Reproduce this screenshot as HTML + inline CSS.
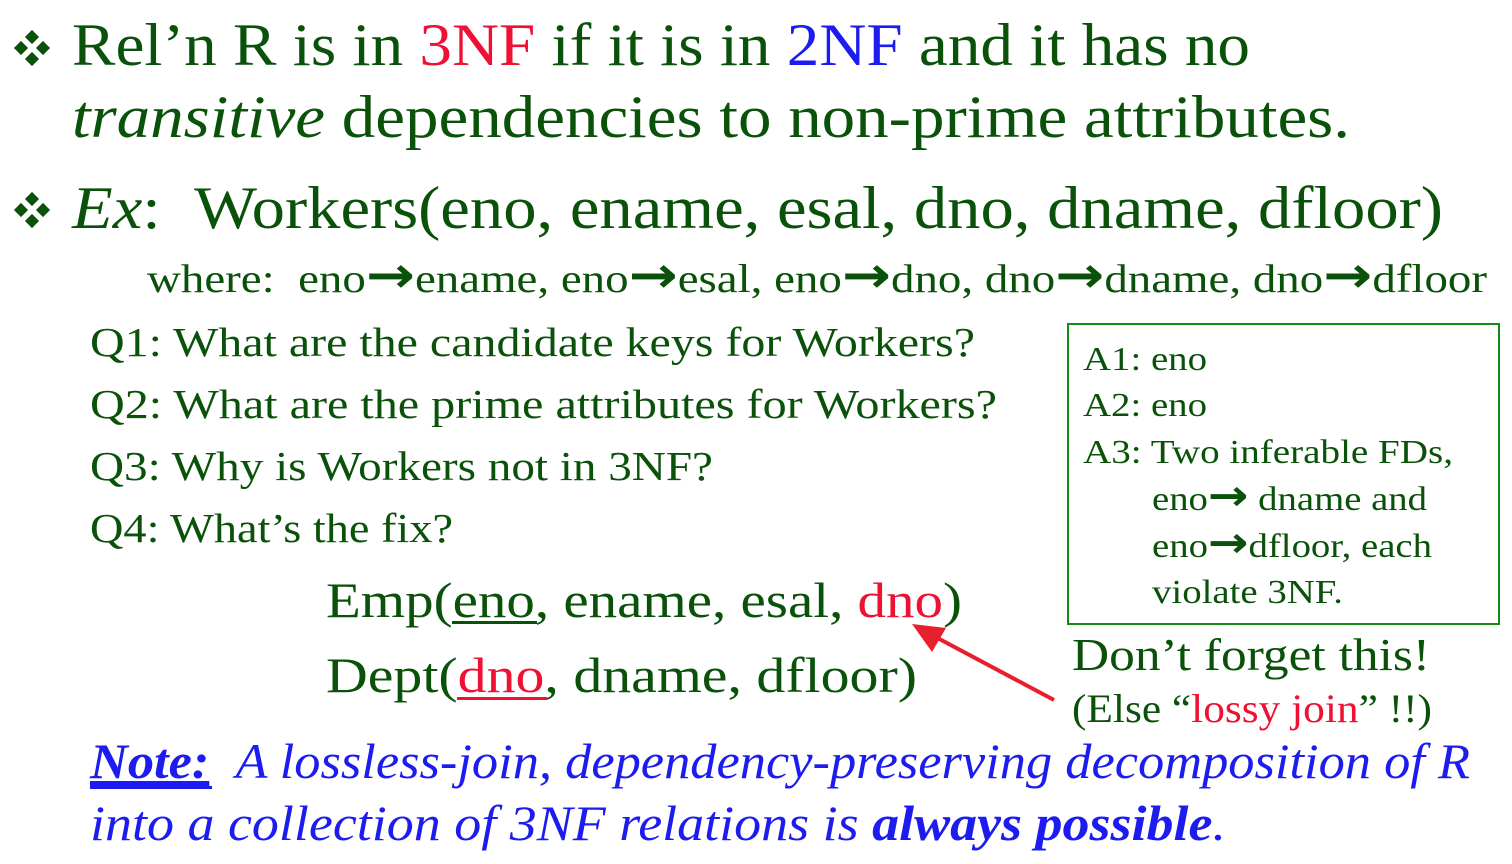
<!DOCTYPE html>
<html><head><meta charset="utf-8"><style>
html,body{margin:0;padding:0;background:#fff;width:1512px;height:864px;overflow:hidden}
svg{display:block}
text{font-family:"Liberation Serif","Times New Roman",serif;fill:#0a5209}
.r{fill:#ee1133}.b{fill:#1c1cf0}
.ar{font-weight:bold;font-size:1.25em;font-family:"DejaVu Sans",sans-serif}
</style></head><body>
<svg width="1512" height="864" viewBox="0 0 1512 864" xmlns="http://www.w3.org/2000/svg" font-family="Liberation Serif">
<g fill="#0a5209">
<g transform="translate(32,48)"><rect x="-5" y="-16" width="10" height="10" transform="rotate(45 0 -11)"/><rect x="-5" y="6" width="10" height="10" transform="rotate(45 0 11)"/><rect x="-16" y="-5" width="10" height="10" transform="rotate(45 -11 0)"/><rect x="6" y="-5" width="10" height="10" transform="rotate(45 11 0)"/></g>
<g transform="translate(32,210)"><rect x="-5" y="-16" width="10" height="10" transform="rotate(45 0 -11)"/><rect x="-5" y="6" width="10" height="10" transform="rotate(45 0 11)"/><rect x="-16" y="-5" width="10" height="10" transform="rotate(45 -11 0)"/><rect x="6" y="-5" width="10" height="10" transform="rotate(45 11 0)"/></g>
</g>
<text x="72" y="65" font-size="60" textLength="1178" lengthAdjust="spacingAndGlyphs">Rel’n R is in <tspan class="r">3NF</tspan> if it is in <tspan class="b">2NF</tspan> and it has no</text>
<text x="72" y="137" font-size="60" textLength="1278" lengthAdjust="spacingAndGlyphs"><tspan font-style="italic">transitive</tspan> dependencies to non-prime attributes.</text>
<text x="72" y="228" font-size="60" textLength="1371" lengthAdjust="spacingAndGlyphs"><tspan font-style="italic">Ex</tspan>:&#160;&#160;Workers(eno, ename, esal, dno, dname, dfloor)</text>
<text x="147" y="292" font-size="40" textLength="1340" lengthAdjust="spacingAndGlyphs">where:&#160;&#160;eno<tspan class="ar">→</tspan>ename, eno<tspan class="ar">→</tspan>esal, eno<tspan class="ar">→</tspan>dno, dno<tspan class="ar">→</tspan>dname, dno<tspan class="ar">→</tspan>dfloor</text>
<text x="90" y="356" font-size="41" textLength="885" lengthAdjust="spacingAndGlyphs">Q1: What are the candidate keys for Workers?</text>
<text x="90" y="418" font-size="41" textLength="907" lengthAdjust="spacingAndGlyphs">Q2: What are the prime attributes for Workers?</text>
<text x="90" y="480" font-size="41" textLength="623" lengthAdjust="spacingAndGlyphs">Q3: Why is Workers not in 3NF?</text>
<text x="90" y="542" font-size="41" textLength="363" lengthAdjust="spacingAndGlyphs">Q4: What’s the fix?</text>
<text x="326" y="617" font-size="50" textLength="636" lengthAdjust="spacingAndGlyphs">Emp(eno, ename, esal, <tspan class="r">dno</tspan>)</text>
<rect x="452" y="621" width="85" height="3" fill="#0a5209"/>
<text x="326" y="692" font-size="50" textLength="591" lengthAdjust="spacingAndGlyphs">Dept(<tspan class="r">dno</tspan>, dname, dfloor)</text>
<rect x="457" y="697" width="90" height="3" fill="#ee1133"/>
<rect x="1068" y="324" width="431" height="300" fill="none" stroke="#138a13" stroke-width="2"/>
<text x="1083" y="370" font-size="34" textLength="124" lengthAdjust="spacingAndGlyphs">A1: eno</text>
<text x="1083" y="416" font-size="34" textLength="124" lengthAdjust="spacingAndGlyphs">A2: eno</text>
<text x="1083" y="463" font-size="34" textLength="370" lengthAdjust="spacingAndGlyphs">A3: Two inferable FDs,</text>
<text x="1152" y="510" font-size="34" textLength="275" lengthAdjust="spacingAndGlyphs">eno<tspan class="ar">→</tspan> dname and</text>
<text x="1152" y="557" font-size="34" textLength="280" lengthAdjust="spacingAndGlyphs">eno<tspan class="ar">→</tspan>dfloor, each</text>
<text x="1152" y="603" font-size="34" textLength="191" lengthAdjust="spacingAndGlyphs">violate 3NF.</text>
<text x="1072" y="670" font-size="46" textLength="358" lengthAdjust="spacingAndGlyphs">Don’t forget this!</text>
<text x="1072" y="722" font-size="40" textLength="360" lengthAdjust="spacingAndGlyphs">(Else “<tspan class="r">lossy join</tspan>” !!)</text>
<line x1="1054" y1="700" x2="930" y2="634" stroke="#e8202e" stroke-width="4"/>
<polygon points="912,624 946,628 932,652" fill="#e8202e"/>
<text x="90" y="778" font-size="50" class="b" font-style="italic" textLength="1380" lengthAdjust="spacingAndGlyphs"><tspan font-weight="bold" text-decoration="underline">Note:</tspan>&#160;&#160;A lossless-join, dependency-preserving decomposition of R</text>
<rect x="90" y="786" width="122" height="3" fill="#1c1cf0"/>
<text x="90" y="840" font-size="50" class="b" font-style="italic" textLength="1136" lengthAdjust="spacingAndGlyphs">into a collection of 3NF relations is <tspan font-weight="bold">always possible</tspan>.</text>
</svg>
</body></html>
